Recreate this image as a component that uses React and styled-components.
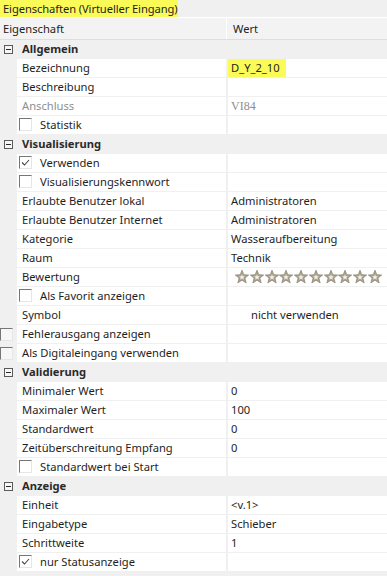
import React from 'react';
import styled, { createGlobalStyle } from 'styled-components';

const Global = createGlobalStyle`
  html, body { margin: 0; padding: 0; background: #f0f0f0; }
  body {
    font-family: "Noto Sans", "DejaVu Sans", sans-serif;
    font-size: 11.2px;
    color: #1e1e1e;
  }
`;

const Panel = styled.div`
  width: 387px;
  height: 576px;
  overflow: hidden;
  display: flex;
  flex-direction: column;
  background: #f0f0f0;
`;

const TitleBar = styled.div`
  height: 17px;
  display: flex;
  align-items: stretch;
`;

const TitleText = styled.span`
  background: #fbfb58;
  padding: 0 3px;
  line-height: 17px;
  width: 172px;
  white-space: nowrap;
  letter-spacing: -0.1px;
`;

const Header = styled.div`
  display: grid;
  grid-template-columns: 226px 1fr;
  height: 21px;
  border-top: 1px solid #ffffff;
  border-bottom: 1px solid #dedede;
  background: #f3f3f3;
`;

const HeaderCell = styled.div`
  line-height: 21px;
  padding-left: ${p => (p.$divider ? '6px' : '3px')};
  border-left: ${p => (p.$divider ? '1px solid #ffffff' : 'none')};
`;

const Row = styled.div`
  display: grid;
  grid-template-columns: 17px 209px 1fr;
  height: 19px;
`;

const CategoryRow = styled.div`
  display: grid;
  grid-template-columns: 17px 1fr;
  height: 19px;
  background: #f0f0f0;
`;

const Gutter = styled.div`
  display: flex;
  align-items: flex-start;
  justify-content: ${p => (p.$center ? 'center' : 'flex-start')};
  padding-top: ${p => (p.$center ? '5px' : '3px')};
  box-sizing: border-box;
`;

const CategoryLabel = styled.div`
  font-weight: bold;
  padding-left: 5px;
  line-height: 18px;
  color: #2a2a2a;
`;

const NameCell = styled.div`
  background: #ffffff;
  border-bottom: 1px solid #f0f0f0;
  display: flex;
  align-items: center;
  gap: 8px;
  padding-left: ${p => (p.$boxed ? '2px' : '5px')};
  color: ${p => (p.$muted ? '#8e8e8e' : '#1e1e1e')};
  white-space: nowrap;
  overflow: hidden;
  line-height: 18px;
  align-self: stretch;
  box-sizing: border-box;
`;

const BoxWrap = styled.span`
  align-self: flex-start;
  margin-top: 2px;
  display: flex;
`;

const ValueCell = styled.div`
  background: #ffffff;
  border-bottom: 1px solid #f0f0f0;
  border-left: 2px solid #f0f0f0;
  padding-left: ${p => p.$indent || 3}px;
  line-height: 18px;
  white-space: nowrap;
  overflow: hidden;
  color: ${p => (p.$muted ? '#8e8e8e' : '#1e1e1e')};
  font-family: ${p => (p.$serif ? '"Liberation Serif", serif' : 'inherit')};
  font-size: ${p => (p.$serif ? '12px' : 'inherit')};
  display: flex;
  align-items: stretch;
`;

const Highlight = styled.span`
  background: #fbfb58;
  margin-left: -3px;
  padding: 0 6px 0 3px;
`;

const Box = styled.span`
  width: 13px;
  height: 13px;
  box-sizing: border-box;
  border-top: 1px solid #767676;
  border-left: 1px solid #767676;
  border-right: 1px solid #e6e6e6;
  border-bottom: 1px solid #e6e6e6;
  background: ${p => (p.$onGray ? '#f7f7f7' : '#ffffff')};
  display: flex;
  align-items: center;
  justify-content: center;
`;

const ExpandBox = styled.span`
  width: 9px;
  height: 9px;
  box-sizing: border-box;
  border: 1px solid #5a5a5a;
  background: #f7f7f7;
  display: flex;
  align-items: center;
  justify-content: center;
  &::after {
    content: '';
    width: 5px;
    height: 1px;
    background: #2a2a2a;
  }
`;

const Stars = styled.div`
  display: flex;
  gap: 0.75px;
  align-items: center;
  margin-left: 4px;
`;

const Check = () => (
  <svg width="11" height="11" viewBox="0 0 11 11">
    <polyline points="2,5.5 4.5,8 9,3" fill="none" stroke="#444" strokeWidth="1.1" />
  </svg>
);

const Checkbox = ({ checked, onGray }) => (
  <Box $onGray={onGray}>{checked && <Check />}</Box>
);

const Star = () => (
  <svg width="14" height="14" viewBox="0 0 14 14">
    <polygon
      points="7,0.2 8.8,4.7 13.7,5 9.9,8.1 11.2,12.9 7,10.2 2.8,12.9 4.1,8.1 0.3,5 5.2,4.7"
      fill="#a9a18d"
      stroke="#8a8270"
      strokeWidth="0.7"
      strokeLinejoin="round"
    />
    <polygon
      points="7,4.2 7.8,6.2 9.9,6.35 8.3,7.7 8.85,9.75 7,8.6 5.15,9.75 5.7,7.7 4.1,6.35 6.2,6.2"
      fill="#f2efe8"
    />
  </svg>
);

const Category = ({ label }) => (
  <CategoryRow>
    <Gutter $center>
      <ExpandBox />
    </Gutter>
    <CategoryLabel>{label}</CategoryLabel>
  </CategoryRow>
);

const Prop = ({ name, value, muted, valueMuted, serif, indent, children }) => (
  <Row>
    <Gutter />
    <NameCell $muted={muted}>{name}</NameCell>
    <ValueCell $muted={valueMuted} $serif={serif} $indent={indent}>
      {children || value}
    </ValueCell>
  </Row>
);

const CheckProp = ({ name, checked }) => (
  <Row>
    <Gutter />
    <NameCell $boxed>
      <BoxWrap>
        <Checkbox checked={checked} />
      </BoxWrap>
      {name}
    </NameCell>
    <ValueCell />
  </Row>
);

const GutterCheckProp = ({ name, checked }) => (
  <Row>
    <Gutter>
      <Checkbox checked={checked} onGray />
    </Gutter>
    <NameCell>{name}</NameCell>
    <ValueCell />
  </Row>
);

export default function App() {
  return (
    <>
      <Global />
      <Panel>
        <TitleBar>
          <TitleText>Eigenschaften (Virtueller Eingang)</TitleText>
        </TitleBar>
        <Header>
          <HeaderCell>Eigenschaft</HeaderCell>
          <HeaderCell $divider>Wert</HeaderCell>
        </Header>

        <Category label="Allgemein" />
        <Prop name="Bezeichnung">
          <Highlight>D_Y_2_10</Highlight>
        </Prop>
        <Prop name="Beschreibung" value="" />
        <Prop name="Anschluss" muted value="VI84" valueMuted serif />
        <CheckProp name="Statistik" />

        <Category label="Visualisierung" />
        <CheckProp name="Verwenden" checked />
        <CheckProp name="Visualisierungskennwort" />
        <Prop name="Erlaubte Benutzer lokal" value="Administratoren" />
        <Prop name="Erlaubte Benutzer Internet" value="Administratoren" />
        <Prop name="Kategorie" value="Wasseraufbereitung" />
        <Prop name="Raum" value="Technik" />
        <Prop name="Bewertung">
          <Stars>
            {Array.from({ length: 10 }).map((_, i) => (
              <Star key={i} />
            ))}
          </Stars>
        </Prop>
        <CheckProp name="Als Favorit anzeigen" />
        <Prop name="Symbol" value="nicht verwenden" indent={23} />
        <GutterCheckProp name="Fehlerausgang anzeigen" />
        <GutterCheckProp name="Als Digitaleingang verwenden" />

        <Category label="Validierung" />
        <Prop name="Minimaler Wert" value="0" />
        <Prop name="Maximaler Wert" value="100" />
        <Prop name="Standardwert" value="0" />
        <Prop name="Zeitüberschreitung Empfang" value="0" />
        <CheckProp name="Standardwert bei Start" />

        <Category label="Anzeige" />
        <Prop name="Einheit" value="<v.1>" />
        <Prop name="Eingabetype" value="Schieber" />
        <Prop name="Schrittweite" value="1" />
        <CheckProp name="nur Statusanzeige" checked />
      </Panel>
    </>
  );
}
